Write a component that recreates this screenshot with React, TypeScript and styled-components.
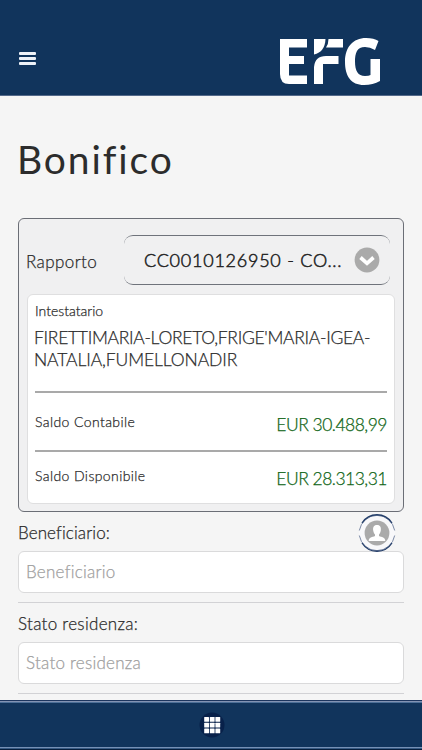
import React from "react";
import styled, { createGlobalStyle } from "styled-components";

const GlobalStyle = createGlobalStyle`
  * { box-sizing: border-box; }
  body { margin: 0; background: #f5f5f5; font-family: Lato, "Open Sans", sans-serif; font-variant-ligatures: none; color: #2a2a2a; }
`;

const Screen = styled.div`
  display: flex;
  flex-direction: column;
  width: 422px;
  height: 750px;
  overflow: hidden;
  background: #f5f5f5;
`;

const Header = styled.header`
  display: flex;
  flex: none;
  justify-content: space-between;
  align-items: flex-start;
  height: 96px;
  padding: 38px 41px 0 19px;
  background: #11345c;
  border-bottom: 1px solid #53698a;
`;

const MenuButton = styled.button`
  display: flex;
  flex-direction: column;
  gap: 2px;
  width: 17px;
  margin: 14px 0 0;
  padding: 0;
  border: 0;
  background: none;
`;

const MenuBar = styled.span`
  height: 3px;
  border-radius: 1px;
  background: #eef2f8;
`;

const Content = styled.main`
  flex: 1;
  min-height: 0;
  padding: 0 18px;
`;

const Title = styled.h1`
  margin: 39px 0 0 -1px;
  height: 83px;
  font-size: 39px;
  font-weight: 400;
  line-height: 48px;
  letter-spacing: 1.9px;
  color: #2c2c2c;
`;

const Panel = styled.section`
  height: 294px;
  padding: 16px 8px 0;
  border: 1px solid #6b6e76;
  border-radius: 6px;
  background: #f0f0f1;
`;

const AccountRow = styled.div`
  display: flex;
  align-items: center;
  justify-content: space-between;
  height: 50px;
  padding-right: 5px;
`;

const Text = styled.span<{ $size: number; $track: number; $stroke?: number }>`
  font-size: ${(p) => p.$size}px;
  font-weight: 300;
  letter-spacing: ${(p) => p.$track}px;
  -webkit-text-stroke: ${(p) => p.$stroke ?? 0.25}px currentColor;
  white-space: nowrap;
`;

const RowLabel = styled(Text)`
  margin: 2px 0 0 -1px;
`;

const Select = styled.button`
  display: flex;
  align-items: center;
  justify-content: space-between;
  width: 266px;
  height: 50px;
  padding: 0 10px 0 20px;
  border: solid #6f737b;
  border-width: 1px 0;
  border-radius: 9px;
  background: #f0f0f1;
  color: #222;
  font-family: inherit;
`;

const Details = styled.div`
  height: 210px;
  margin-top: 9px;
  padding: 7px 7px 0;
  border: 1px solid #dfdfe0;
  border-radius: 6px;
  background: #fff;
`;

const Caption = styled.div`
  height: 25px;
  line-height: 16px;
`;

const Holder = styled.div`
  height: 64px;
  margin-left: -1px;
  line-height: 22px;
`;

const Balance = styled.div<{ $height: number; $top: number }>`
  display: flex;
  justify-content: space-between;
  height: ${(p) => p.$height}px;
  padding-top: ${(p) => p.$top}px;
  border-top: 2px solid #a9a9a9;
  line-height: 24px;
`;

const Amount = styled(Text)`
  padding-top: 3px;
  color: #0f6516;
`;

const Field = styled.div`
  height: 91px;
  border-bottom: 1px solid #d2d2d5;
`;

const FieldHead = styled.div`
  display: flex;
  justify-content: space-between;
  align-items: center;
  height: 39px;
  padding: 1px 8px 0 0;
`;

const Input = styled.input`
  display: block;
  width: 100%;
  height: 42px;
  padding: 0 7px 2px;
  border: 1px solid #dadadb;
  border-radius: 6px;
  background: #fff;
  font: 300 17px Lato, "Open Sans", sans-serif;
  font-variant-ligatures: none;
  letter-spacing: 0.25px;
  &::placeholder { color: #a0a0a0; opacity: 1; -webkit-text-stroke: 0.25px #a0a0a0; }
`;

const ContactButton = styled.button`
  flex: none;
  display: block;
  width: 38px;
  height: 38px;
  margin: 1px 0 0;
  padding: 0;
  border: 0;
  background: none;
`;

const Footer = styled.footer`
  display: flex;
  flex: none;
  justify-content: center;
  height: 50px;
  padding: 10px 0 0 1px;
  background:
    linear-gradient(#1d355f 0 1px, #8292b2 1px 2px, #4d6f98 2px 3px, transparent 3px 47px, #7690b5 47px 48px, #375a83 48px 49px, #071d3b 49px),
    #11345c;
`;

const Logo = () => (
  <svg width="101" height="47" viewBox="0 0 101 47" fill="#fff" aria-label="EFG">
    <path d="M0 1H27V9.5H9V18H24V26H9V37.5H27V46H9Q0 46 0 36Z" />
    <path d="M34 1H45.500Q45 14 34 16.500Z" />
    <path d="M48.500 1H63V9.500H46Q48.500 6 48.500 1Z" />
    <path d="M34 46V29Q35 18 46 18H58.500V26H43V46Z" />
    <path d="M98.500 3L95 12Q90 9 85 9C77 9 75 15 75 23.500C75 33 78 38 85 38Q89 38 90.500 37V21H100V43Q93 47 84 47C71 47 65 38 65 24C65 9 73 0 86 0Q94 0 98.500 3Z" />
  </svg>
);

const ChevronIcon = () => (
  <svg width="26" height="26" viewBox="0 0 26 26">
    <circle cx="13" cy="13" r="12.400" fill="#aaa" />
    <path d="M6.500 10.500L13 16.300L19.500 10.500" fill="none" stroke="#fff" strokeWidth="3.700" />
  </svg>
);

const PersonIcon = () => (
  <svg width="38" height="38" viewBox="0 0 38 38">
    <circle cx="19" cy="19" r="18" fill="#f8f8fa" />
    <path d="M1.300 16.500A18 18.500 0 0 1 36.700 16.500M1.300 21.500A18 18.500 0 0 0 36.700 21.500" fill="none" stroke="#5b6c8e" strokeWidth=".8" />
    <path d="M4 9A18 18.500 0 0 1 34 9M4 29A18 18.500 0 0 0 34 29" fill="none" stroke="#233d69" strokeWidth="1.300" />
    <circle cx="19" cy="19" r="12.400" fill="#aaa" />
    <path d="M19 11C15.500 11 14.800 13.500 15.200 16.500C15.600 19 16.500 20 17 20.500V22C14.500 23.300 10.700 23 10.700 27H27.300C27.300 23 23.500 23.300 21 22V20.500C21.500 20 22.400 19 22.800 16.500C23.200 13.500 22.500 11 19 11Z" fill="#fff" />
  </svg>
);

const GridIcon = () => (
  <svg width="28" height="28" viewBox="0 0 28 28">
    <circle cx="14" cy="15" r="12.500" fill="#08214a" />
    {[7, 12.7, 18.4].map((y) =>
      [6.2, 11.8, 17.4].map((x) => <rect key={`${x}-${y}`} x={x} y={y} width="4.800" height="4.800" rx=".5" fill="#fff" />),
    )}
  </svg>
);

export default function App() {
  return (
    <>
      <GlobalStyle />
      <Screen>
        <Header>
          <MenuButton aria-label="Menu">
            <MenuBar />
            <MenuBar />
            <MenuBar />
          </MenuButton>
          <Logo />
        </Header>
        <Content>
          <Title>Bonifico</Title>
          <Panel>
            <AccountRow>
              <RowLabel $size={17} $track={0.4}>Rapporto</RowLabel>
              <Select>
                <Text $size={18} $track={0.75} $stroke={0.5}>CC0010126950 - CO...</Text>
                <ChevronIcon />
              </Select>
            </AccountRow>
            <Details>
              <Caption>
                <Text $size={14} $track={0}>Intestatario</Text>
              </Caption>
              <Holder>
                <Text as="div" $size={17.5} $track={-0.3}>FIRETTIMARIA-LORETO,FRIGE'MARIA-IGEA-</Text>
                <Text as="div" $size={17.5} $track={-0.1}>NATALIA,FUMELLONADIR</Text>
              </Holder>
              <Balance $height={59} $top={17}>
                <Text $size={14} $track={0.4}>Saldo Contabile</Text>
                <Amount $size={17.5} $track={-0.5}>EUR 30.488,99</Amount>
              </Balance>
              <Balance $height={50} $top={12}>
                <Text $size={14} $track={0.4}>Saldo Disponibile</Text>
                <Amount $size={17.5} $track={-0.5}>EUR 28.313,31</Amount>
              </Balance>
            </Details>
          </Panel>
          <Field>
            <FieldHead>
              <Text $size={17} $track={0.1}>Beneficiario:</Text>
              <ContactButton aria-label="Rubrica"><PersonIcon /></ContactButton>
            </FieldHead>
            <Input placeholder="Beneficiario" />
          </Field>
          <Field>
            <FieldHead>
              <Text $size={17} $track={0.3}>Stato residenza:</Text>
            </FieldHead>
            <Input placeholder="Stato residenza" />
          </Field>
        </Content>
        <Footer><GridIcon /></Footer>
      </Screen>
    </>
  );
}
